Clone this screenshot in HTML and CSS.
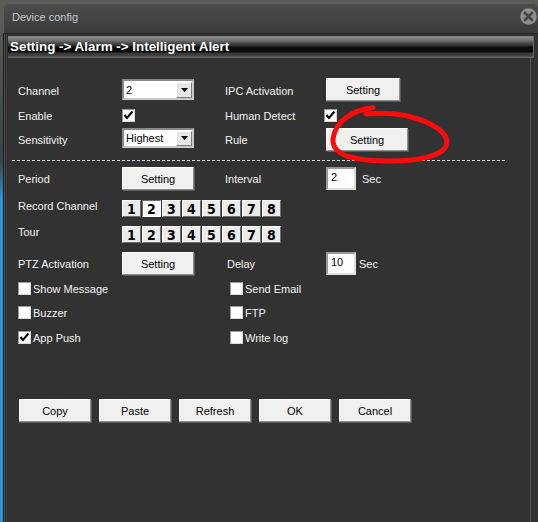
FILE: index.html
```html
<!DOCTYPE html>
<html>
<head>
<meta charset="utf-8">
<link rel="stylesheet" href="styles.css">
</head>
<body>
<div class="win">
  <div class="titlebar">
    <span class="title">Device config</span>
    <span class="close">
      <svg width="17" height="17" viewBox="0 0 17 17"><circle cx="8.5" cy="8.5" r="8.3" fill="#8e8e8e"/><path d="M5 5 L12 12 M12 5 L5 12" stroke="#444" stroke-width="2.6" stroke-linecap="round"/></svg>
    </span>
  </div>
  <div class="frame">
    <div class="header">Setting -&gt; Alarm -&gt; Intelligent Alert</div>
    <div class="content">
      <div class="row r1">
        <span class="lbl">Channel</span>
        <div class="sel"><span>2</span><span class="drop"><svg width="7" height="4" viewBox="0 0 7 4"><polygon points="0,0 7,0 3.5,4" fill="#000"/></svg></span></div>
        <span class="lbl">IPC Activation</span>
        <div class="btn w75">Setting</div>
      </div>
      <div class="row r2">
        <span class="lbl">Enable</span>
        <span class="chk"><svg width="11" height="11" viewBox="0 0 11 11"><path d="M1.5 5 L4 8 L9.5 1.5" fill="none" stroke="#000" stroke-width="2"/></svg></span>
        <span class="lbl">Human Detect</span>
        <span class="chk shift"><svg width="11" height="11" viewBox="0 0 11 11"><path d="M1.5 5 L4 8 L9.5 1.5" fill="none" stroke="#000" stroke-width="2"/></svg></span>
      </div>
      <div class="row r3">
        <span class="lbl">Sensitivity</span>
        <div class="sel h20"><span>Highest</span><span class="drop"><svg width="7" height="4" viewBox="0 0 7 4"><polygon points="0,0 7,0 3.5,4" fill="#000"/></svg></span></div>
        <span class="lbl">Rule</span>
        <div class="btn w83">Setting</div>
      </div>
      <div class="divider"></div>
      <div class="row r4">
        <span class="lbl">Period</span>
        <div class="btn w73">Setting</div>
        <span class="lbl">Interval</span>
        <div class="field g6"><div class="inp">2</div><span class="lbl">Sec</span></div>
      </div>
      <div class="row nrow r5">
        <span class="lbl top">Record Channel</span>
        <div class="nums">
          <span class="num">1</span><span class="num on">2</span><span class="num">3</span><span class="num">4</span><span class="num">5</span><span class="num">6</span><span class="num">7</span><span class="num">8</span>
        </div>
      </div>
      <div class="row nrow r6">
        <span class="lbl top">Tour</span>
        <div class="nums">
          <span class="num">1</span><span class="num">2</span><span class="num">3</span><span class="num">4</span><span class="num">5</span><span class="num">6</span><span class="num">7</span><span class="num">8</span>
        </div>
      </div>
      <div class="row r7">
        <span class="lbl">PTZ Activation</span>
        <div class="btn w73">Setting</div>
        <span class="lbl pl2">Delay</span>
        <div class="field g3"><div class="inp">10</div><span class="lbl">Sec</span></div>
      </div>
      <div class="crow c1">
        <label class="citem"><span class="chk"></span><span>Show Message</span></label>
        <label class="citem"><span class="chk"></span><span>Send Email</span></label>
      </div>
      <div class="crow c2">
        <label class="citem"><span class="chk"></span><span>Buzzer</span></label>
        <label class="citem"><span class="chk"></span><span>FTP</span></label>
      </div>
      <div class="crow c3">
        <label class="citem"><span class="chk"><svg width="11" height="11" viewBox="0 0 11 11"><path d="M1.5 5 L4 8 L9.5 1.5" fill="none" stroke="#000" stroke-width="2"/></svg></span><span>App Push</span></label>
        <label class="citem"><span class="chk"></span><span>Write log</span></label>
      </div>
      <div class="actions">
        <div class="btn w73">Copy</div>
        <div class="btn w73">Paste</div>
        <div class="btn w73">Refresh</div>
        <div class="btn w73">OK</div>
        <div class="btn w73">Cancel</div>
      </div>
    </div>
  </div>
  <svg class="annot" viewBox="3 3 535 519" width="535" height="519">
    <path d="M373,107.5 C352,110 335,122 333,139 C332,156 355,160.5 385,161 C415,161.5 441,157 446,146 C451,133 431,121 405,115.5 C390,112.5 377,113 366,114" fill="none" stroke="#ff0a0a" stroke-width="5" stroke-linecap="round" stroke-linejoin="round"/>
  </svg>
</div>
</body>
</html>
```
FILE: styles.css
```css
* { box-sizing: border-box; }
html, body { margin: 0; padding: 0; }
body {
  width: 538px;
  height: 522px;
  overflow: hidden;
  background: linear-gradient(#5a6058, #3a4246 160px, #2d97d6 200px);
  font-family: "Liberation Sans", Arial, sans-serif;
  font-size: 11px;
}
.win {
  position: relative;
  margin: 3px 0 0 3px;
  width: 535px;
  height: 519px;
  background: #323232;
  border-radius: 6px 6px 0 0;
}
.titlebar {
  height: 30px;
  display: flex;
  align-items: center;
  padding: 0 1px 4px 8px;
  background: linear-gradient(#4c4c4c, #3b3b3b);
  border-radius: 6px 6px 0 0;
  border-top: 1px solid #5e5e5e;
  border-left: 1px solid #5e5e5e;
}
.title { color: #c3cad0; font-size: 11px; }
.close { margin-left: auto; width: 17px; height: 17px; display: block; }
.close svg { display: block; }
.frame {
  height: 489px;
  padding-top: 2px;
  border-top: 1px solid #242424;
  background: linear-gradient(to right, #1c1c1c 0 1px, #545454 1px 2px, #222 2px 3px, #4a4a4a 3px 4px, #2a2a2a 4px 5px, #323232 5px);
}
.header {
  margin-left: 5px;
  width: 526px;
  height: 22px;
  line-height: 22px;
  padding-left: 2px;
  color: #fff;
  font-weight: bold;
  font-size: 13.4px;
  background: linear-gradient(#6c6c6c 0, #8e8e8e 1px, #6a6a6a 5px, #4a4a4a 7px, #2a2a2a 10px, #0c0c0c 11px, #0a0a0a 16px, #353535 17px, #454545 20px, #626262 21px, #626262 22px);
  border-right: 1px solid #6a6a6a;
}
.content {
  margin-left: 5px;
  width: 523px;
  height: 464px;
  padding-left: 10px;
  border-right: 1px solid #585858;
  background: #323232;
  overflow: hidden;
}
.lbl { color: #f2f2f2; white-space: nowrap; }
.row {
  display: grid;
  grid-template-columns: 104px 103px 101px auto;
  align-items: center;
  justify-items: start;
  height: 23px;
}
.r1 { margin-top: 20px; }
.r1 .lbl { padding-top: 2px; }
.r2 { margin-top: 3px; }
.r3 { margin-top: 1px; }
.r4 { margin-top: 6px; }
.nrow { height: 17px; }
.r5 { margin-top: 10px; }
.r6 { margin-top: 9px; }
.r7 { margin-top: 9px; }
.lbl.top { align-self: start; }
.pl2 { padding-left: 2px; }
.divider {
  margin: 9px 0 0 -6px;
  width: 494px;
  height: 1px;
  background: repeating-linear-gradient(to right, #d2e4f4 0 3px, transparent 3px 5px);
}
.sel {
  width: 72px;
  height: 21px;
  display: flex;
  align-items: center;
  justify-content: space-between;
  background: #fff;
  border: 2px solid;
  border-color: #8a8a8a #cacaca #cacaca #8a8a8a;
  padding-left: 2px;
  color: #000;
}
.sel.h20 { height: 20px; align-self: start; }
.drop {
  width: 16px;
  height: 16px;
  background: #e6e6e6;
  border: 1px solid;
  border-color: #fff #7a7a7a #7a7a7a #fff;
  display: flex;
  align-items: center;
  justify-content: center;
}
.h20 .drop { height: 15px; }
.drop svg { display: block; }
.btn {
  height: 23px;
  background: #f0f0f0;
  border: 1px solid;
  border-color: #fff #8c8c8c #8c8c8c #fff;
  box-shadow: 1px 1px 0 #5a5a5a;
  display: flex;
  align-items: center;
  justify-content: center;
  color: #000;
  font-size: 11px;
}
.w75 { width: 74px; }
.w83 { width: 82px; }
.w73 { width: 72px; }
.chk {
  width: 13px;
  height: 13px;
  background: #fff;
  border: 1px solid;
  border-color: #9a9a9a #d8d8d8 #d8d8d8 #9a9a9a;
  display: flex;
  align-items: center;
  justify-content: center;
  flex: none;
}
.chk svg { display: block; }
.chk.shift { margin-left: -2px; }
.nums {
  grid-column: 2 / 5;
  display: flex;
  gap: 1px;
}
.num {
  width: 19px;
  height: 17px;
  background: #ebebeb;
  border: 1px solid;
  border-color: #fff #6e6e6e #6e6e6e #fff;
  display: flex;
  align-items: center;
  justify-content: center;
  font-family: "Liberation Sans Narrow", "DejaVu Sans Condensed", sans-serif;
  font-weight: bold;
  font-size: 14px;
  line-height: 1;
  color: #000;
}
.num.on {
  background: #fff;
  border-color: #6a6a6a #fff #fff #6a6a6a;
}
.field { display: flex; align-items: center; }
.g6 { gap: 6px; }
.g3 { gap: 3px; }
.inp {
  width: 30px;
  height: 23px;
  background: #fff;
  border: 2px solid;
  border-color: #9a9a9a #dedede #dedede #9a9a9a;
  padding: 2px 0 0 3px;
  line-height: 13px;
  color: #000;
}
.crow {
  display: grid;
  grid-template-columns: 212px auto;
  height: 13px;
}
.c1 { margin-top: 7px; }
.c2 { margin-top: 11px; }
.c3 { margin-top: 12px; }
.citem {
  display: flex;
  align-items: center;
  gap: 2px;
  color: #f2f2f2;
  white-space: nowrap;
}
.actions {
  display: flex;
  gap: 8px;
  margin: 55px 0 0 1px;
}
.annot {
  position: absolute;
  left: 0;
  top: 0;
  pointer-events: none;
}
```
